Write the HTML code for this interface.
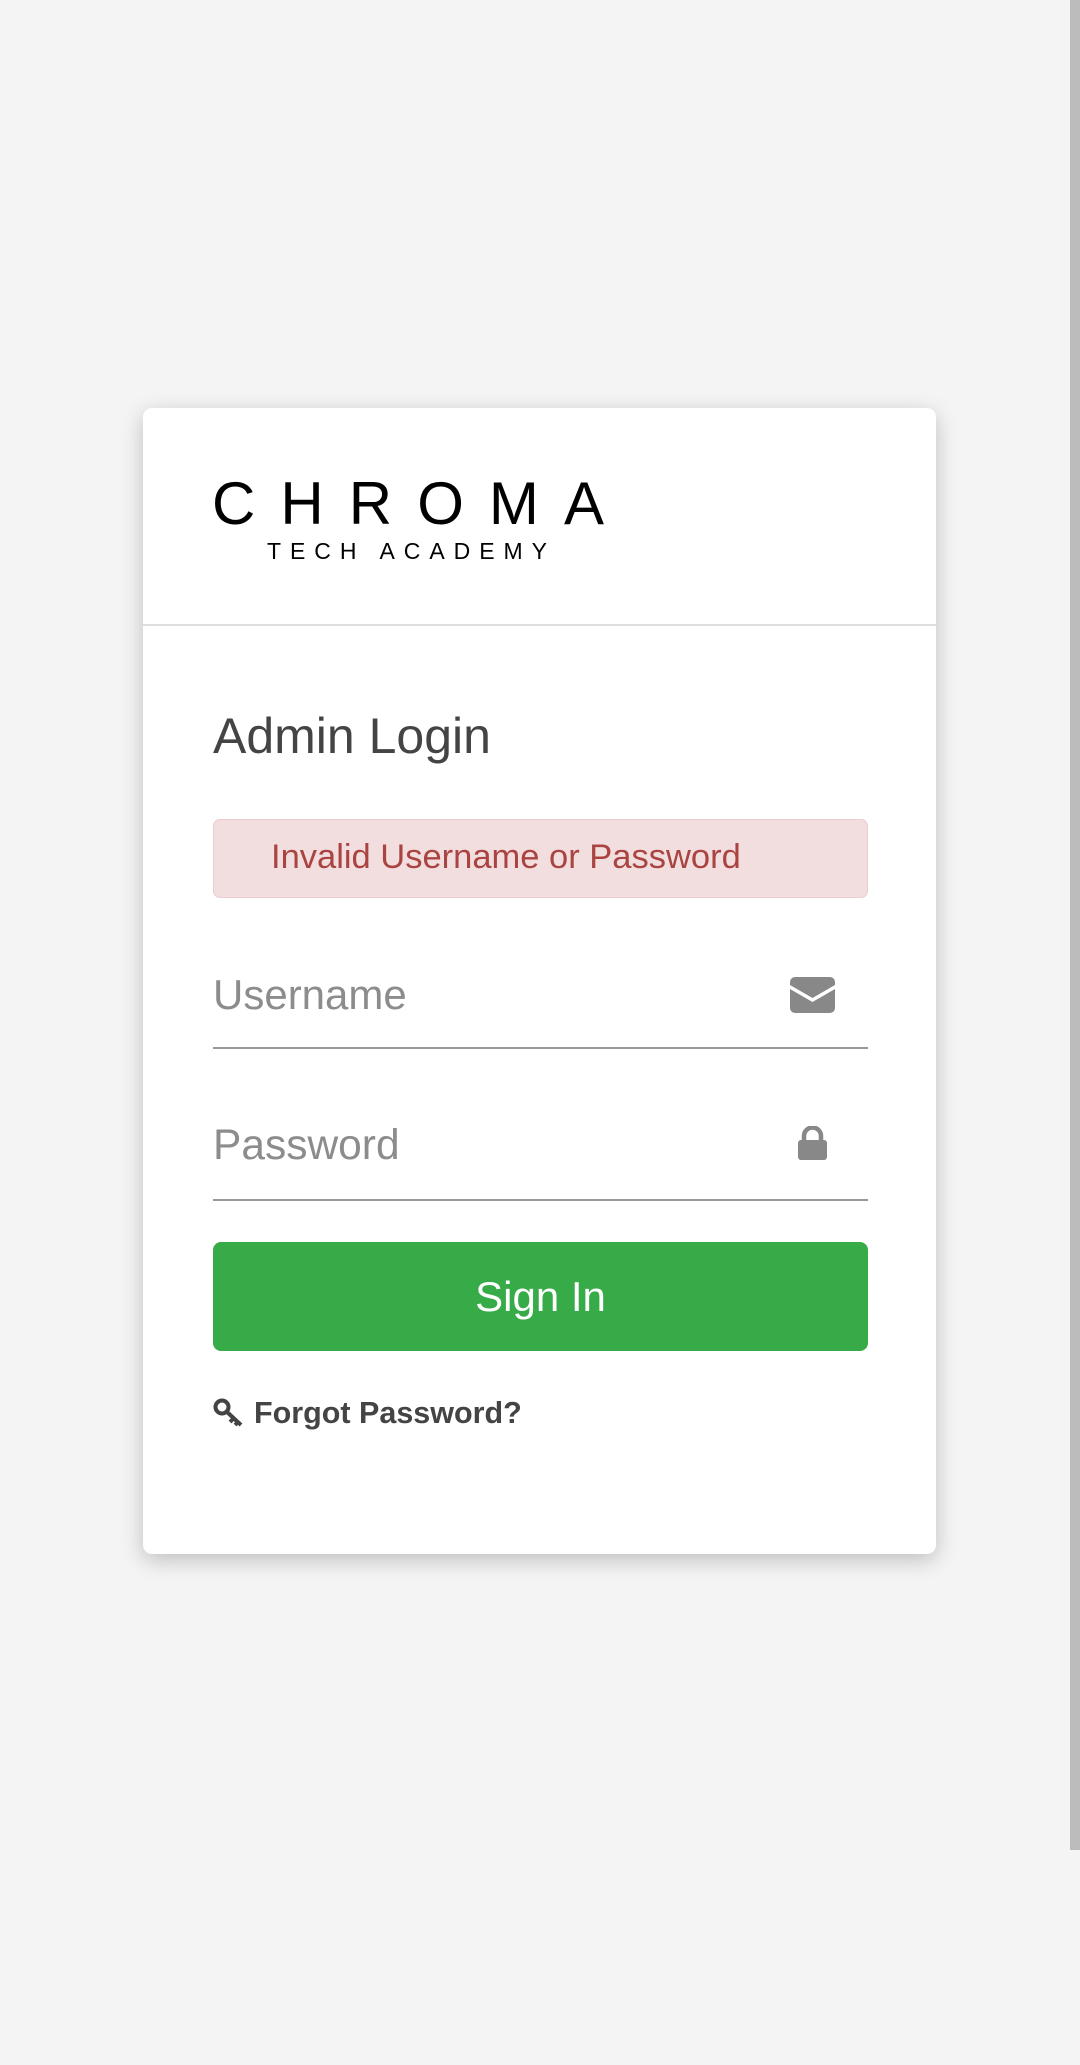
<!DOCTYPE html>
<html><head><meta charset="utf-8">
<style>
html,body{margin:0;padding:0;}
body{width:1080px;height:2065px;background:#f4f4f4;position:relative;overflow:hidden;font-family:"Liberation Sans",sans-serif;}
.sb{position:absolute;left:1070px;top:0;width:10px;height:1850px;background:#bcbcbc;}
.card{position:absolute;left:143px;top:408px;width:793px;height:1146px;background:#fff;border-radius:9px;box-shadow:0 6px 22px rgba(0,0,0,0.22);}
.div{position:absolute;left:0;right:0;top:216px;height:2px;background:#dedede;}
.abs{position:absolute;}
</style></head><body>
<div class="sb"></div>
<div class="card">
  <svg class="abs" style="left:60px;top:60px" width="420" height="110" viewBox="0 0 420 110">
    <text x="9" y="56" font-family="Liberation Sans, sans-serif" font-size="60" textLength="392" lengthAdjust="spacing" fill="#000">CHROMA</text>
    <text x="64" y="91" font-family="Liberation Sans, sans-serif" font-size="23" textLength="280" lengthAdjust="spacing" fill="#000">TECH ACADEMY</text>
  </svg>
  <div class="div"></div>
  <div class="abs" style="left:70px;top:303px;font-size:50px;color:#444;line-height:1;">Admin Login</div>
  <div class="abs" style="left:70px;top:411px;width:655px;height:79px;background:#f2dede;border:1px solid #ebccd1;border-radius:7px;box-sizing:border-box;"></div>
  <div class="abs" style="left:128px;top:432px;font-size:34.5px;color:#a94442;line-height:1;">Invalid Username or Password</div>
  <div class="abs" style="left:70px;top:566px;font-size:42px;color:#8c8c8c;line-height:1;">Username</div>
  <svg class="abs" style="left:647px;top:569px" width="45" height="36" viewBox="0 0 45 36">
    <path d="M5 0H40A5 5 0 0 1 45 5V8L22.5 21L0 8V5A5 5 0 0 1 5 0Z" fill="#888"/>
    <path d="M0 12L22.5 25L45 12V31A5 5 0 0 1 40 36H5A5 5 0 0 1 0 31Z" fill="#888"/>
  </svg>
  <div class="abs" style="left:70px;top:639px;width:655px;height:2px;background:#999;"></div>
  <div class="abs" style="left:70px;top:717px;font-size:42.5px;color:#8c8c8c;line-height:1;">Password</div>
  <svg class="abs" style="left:655px;top:718px" width="29" height="34" viewBox="0 0 29 34">
    <path d="M6 15V10A8.5 8.5 0 0 1 23 10V15" fill="none" stroke="#888" stroke-width="4.5"/>
    <rect x="0" y="14" width="29" height="20" rx="3" fill="#888"/>
  </svg>
  <div class="abs" style="left:70px;top:791px;width:655px;height:2px;background:#999;"></div>
  <div class="abs" style="left:70px;top:834px;width:655px;height:109px;background:#37ab47;border-radius:8px;color:#fff;font-size:42px;line-height:109px;text-align:center;">Sign In</div>
  <svg class="abs" style="left:70px;top:990px" width="31" height="30" viewBox="0 0 31 30">
    <circle cx="9" cy="9" r="6.5" fill="none" stroke="#444" stroke-width="4"/>
    <path d="M13 13L28 27M21 20L17 24M25 24L22 27" stroke="#444" stroke-width="4" fill="none"/>
  </svg>
  <div class="abs" style="left:111px;top:990px;font-size:30.5px;font-weight:bold;color:#444;line-height:1;">Forgot Password?</div>
</div>
</body></html>
